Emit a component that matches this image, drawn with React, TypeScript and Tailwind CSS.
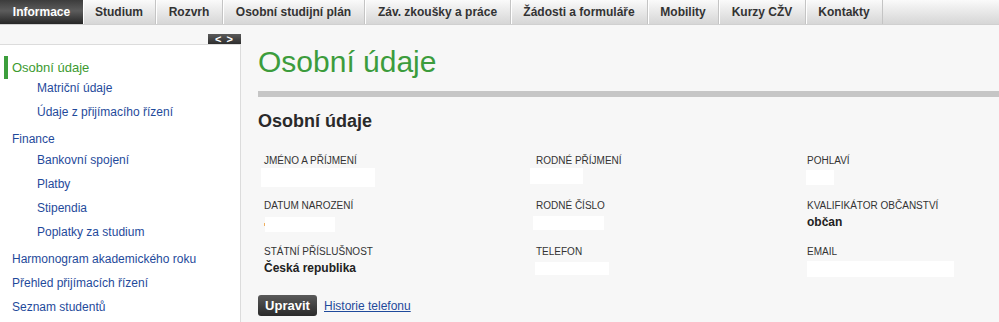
import React from "react";

const tabs = [
  { label: "Informace", w: "w-[83px]", active: true },
  { label: "Studium", w: "w-[73px]" },
  { label: "Rozvrh", w: "w-[67px]" },
  { label: "Osobní studijní plán", w: "w-[142px]" },
  { label: "Záv. zkoušky a práce", w: "w-[146px]" },
  { label: "Žádosti a formuláře", w: "w-[137px]" },
  { label: "Mobility", w: "w-[71px]" },
  { label: "Kurzy CŽV", w: "w-[87px]" },
  { label: "Kontakty", w: "w-[77px]" },
];

const Redacted = ({ className }: { className: string }) => <div className={`bg-white ${className}`} />;

const Label = ({ children }: { children: React.ReactNode }) => (
  <div className="text-[10px] leading-[13px] text-[#333]">{children}</div>
);

const Value = ({ children }: { children: React.ReactNode }) => (
  <div className="mt-[2px] text-[12px] font-bold leading-[16px] text-[#222]">{children}</div>
);

const SubLink = ({ children }: { children: React.ReactNode }) => (
  <a className="block h-[20px] pl-[37px] leading-[20px] text-[#1f4a9b]">{children}</a>
);

const TopLink = ({ children }: { children: React.ReactNode }) => (
  <a className="block h-[20px] pl-[12px] leading-[20px] text-[#1f4a9b]">{children}</a>
);

export default function App() {
  return (
    <div className="h-[322px] w-[999px] overflow-hidden bg-[#f7f7f7] font-['Liberation_Sans',Arial,sans-serif]">
      {/* top tabs */}
      <div className="flex h-[25px] bg-gradient-to-b from-[#fafafa] to-[#d6d6d6] border-b border-[#d0d0d0]">
        {tabs.map((t) => (
          <div
            key={t.label}
            className={`${t.w} flex items-center justify-center text-[12px] font-bold ${
              t.active
                ? "bg-[linear-gradient(#3c3c3c,#5c5c5c_45%,#262626)] text-white"
                : "border-r border-[#c4c4c4] text-[#333] shadow-[inset_1px_0_0_#fff]"
            }`}
          >
            {t.label}
          </div>
        ))}
      </div>

      <div className="flex">
        {/* sidebar */}
        <div className="w-[241px] shrink-0">
          <div className="flex h-[19px] items-start justify-end pt-[9px]">
            <div className="flex h-[10px] w-[33px] items-center justify-center bg-[linear-gradient(#5a5a5a,#2e2e2e)] text-[11px] font-bold leading-none tracking-[1px] text-white">
              &lt; &gt;
            </div>
          </div>
          <div className="h-[300px] border-r border-t border-[#dcdcdc] bg-white pt-[13px] text-[12px]">
            <div className="relative">
              <div className="absolute left-[4px] top-[-2px] h-[23px] w-[4px] bg-[#3c9e3c]" />
              <a className="block h-[20px] pl-[12px] text-[13px] leading-[20px] text-[#3c9a2f]">Osobní údaje</a>
            </div>
            <div className="flex flex-col gap-[4px]">
              <SubLink>Matriční údaje</SubLink>
              <SubLink>Údaje z přijímacího řízení</SubLink>
            </div>
            <div className="mt-[7px]">
              <TopLink>Finance</TopLink>
            </div>
            <div className="mt-[1px] flex flex-col gap-[4px]">
              <SubLink>Bankovní spojení</SubLink>
              <SubLink>Platby</SubLink>
              <SubLink>Stipendia</SubLink>
              <SubLink>Poplatky za studium</SubLink>
            </div>
            <div className="mt-[7px] flex flex-col gap-[4px]">
              <TopLink>Harmonogram akademického roku</TopLink>
              <TopLink>Přehled přijímacích řízení</TopLink>
              <TopLink>Seznam studentů</TopLink>
            </div>
          </div>
        </div>

        {/* main */}
        <div className="flex-1 pl-[17px] pt-[20px]">
          <h1 className="text-[30px] font-normal leading-[34px] text-[#3c9c3c]">Osobní údaje</h1>
          <div className="mt-[12px] h-[6px] bg-[#c6c6c6]" />
          <h2 className="mt-[14px] text-[18px] font-bold leading-[21px] text-[#2a2a2a]">Osobní údaje</h2>

          <div className="mt-[22px] grid grid-cols-[272px_271px_1fr] pl-[6px]">
            <div className="h-[45px]">
              <Label>JMÉNO A PŘÍJMENÍ</Label>
              <Redacted className="ml-[-3px] mt-[1px] h-[19px] w-[114px]" />
            </div>
            <div className="h-[45px]">
              <Label>RODNÉ PŘÍJMENÍ</Label>
              <Redacted className="ml-[-6px] mt-[1px] h-[16px] w-[53px]" />
            </div>
            <div className="h-[45px]">
              <Label>POHLAVÍ</Label>
              <Redacted className="ml-[-1px] mt-[3px] h-[15px] w-[28px]" />
            </div>

            <div className="h-[46px]">
              <Label>DATUM NAROZENÍ</Label>
              <div className="mt-[5px] flex items-center">
                <div className="h-[3px] w-[1px] bg-[#f0b060]" />
                <Redacted className="h-[15px] w-[70px]" />
              </div>
            </div>
            <div className="h-[46px]">
              <Label>RODNÉ ČÍSLO</Label>
              <Redacted className="ml-[-3px] mt-[4px] h-[14px] w-[71px]" />
            </div>
            <div className="h-[46px]">
              <Label>KVALIFIKÁTOR OBČANSTVÍ</Label>
              <Value>občan</Value>
            </div>

            <div className="h-[46px]">
              <Label>STÁTNÍ PŘÍSLUŠNOST</Label>
              <Value>Česká republika</Value>
            </div>
            <div className="h-[46px]">
              <Label>TELEFON</Label>
              <Redacted className="ml-[-1px] mt-[4px] h-[13px] w-[74px]" />
            </div>
            <div className="h-[46px]">
              <Label>EMAIL</Label>
              <Redacted className="mt-[3px] h-[16px] w-[147px]" />
            </div>
          </div>

          <div className="mt-[4px] flex items-center gap-[7px]">
            <button className="h-[21px] w-[59px] rounded-[3px] bg-[linear-gradient(#5a5a5a,#2a2a2a)] text-[13px] font-bold text-white">
              Upravit
            </button>
            <a className="text-[12px] text-[#1f4a9b] underline">Historie telefonu</a>
          </div>
        </div>
      </div>
    </div>
  );
}
